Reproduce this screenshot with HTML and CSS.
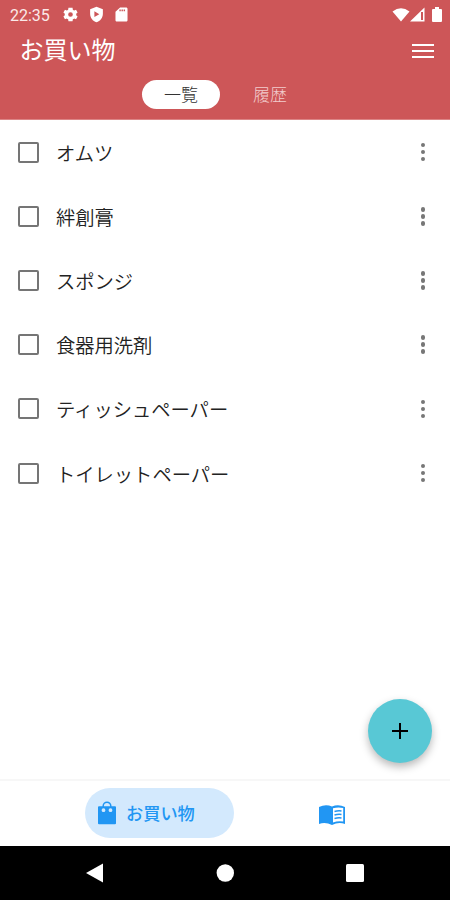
FILE: index.html
```html
<!DOCTYPE html>
<html lang="ja">
  <head>
    <meta charset="UTF-8" />
    <title>お買い物</title>
    <meta name="viewport" content="width=device-width, initial-scale=1.0" />
    <link rel="stylesheet" href="styles.css">
  </head>

  <body>
    <div class="app">
      <header class="header">
        <div class="status-bar">
          <span class="clock">22:35</span>
          <svg class="status-icon" viewBox="0 0 24 24"><path fill-rule="evenodd" d="M20 13.200a8 8 0 0 0 0-2.400l2-1.600-2.200-3.800-2.500 1a8 8 0 0 0-2-1.200L14.900 2.500H9.100l-.4 2.700a8 8 0 0 0-2 1.200l-2.500-1L2 9.200l2 1.600a8 8 0 0 0 0 2.400l-2 1.600 2.200 3.800 2.500-1a8 8 0 0 0 2 1.200l.4 2.700h5.800l.4-2.700a8 8 0 0 0 2-1.200l2.500 1 2.200-3.800zM12 15.300a3.300 3.300 0 1 1 0-6.600 3.300 3.300 0 0 1 0 6.600z" /></svg>
          <svg class="status-icon" viewBox="0 0 24 24"><path fill-rule="evenodd" d="M12 1 3 4.500V11c0 5.500 3.800 10.700 9 12 5.200-1.300 9-6.500 9-12V4.500zM9 7.500v8l7-4z" /></svg>
          <svg class="status-icon" viewBox="0 0 24 24"><path fill-rule="evenodd" d="M18 2h-8L3.500 8v12c0 1.100.9 2 2 2H18.500c1.100 0 2-.9 2-2V4c0-1.100-.9-2-2-2zM9 7.500V5h2v2.500zM12 7.500V5h2v2.500zM15 7.500V5h2v2.500z" /></svg>
          <div class="signals">
            <svg width="18" height="14" viewBox="0 0 18 14"><path d="M.5 3.500Q9-3 17.500 3.500L9 13.500z" /></svg>
            <svg width="15" height="15" viewBox="0 0 15 15"><path fill-rule="evenodd" d="M14.500.5v14H0zM11 5v8h2V5z" /></svg>
            <svg class="battery" width="10" height="15" viewBox="0 0 10 15"><path d="M3 0h4v2h2q1 0 1 1v11q0 1-1 1H1q-1 0-1-1V3q0-1 1-1h2z" /></svg>
          </div>
        </div>
        <div class="title-bar">
          <h1>お買い物</h1>
          <button class="menu-btn" aria-label="メニュー"><span></span><span></span><span></span></button>
        </div>
        <nav class="tabs">
          <a class="tab active">一覧</a>
          <a class="tab">履歴</a>
        </nav>
      </header>

      <main class="content">
        <ul class="list">
          <li class="item"><span class="checkbox"></span><span class="name">オムツ</span><span class="more"><i></i><i></i><i></i></span></li>
          <li class="item"><span class="checkbox"></span><span class="name">絆創膏</span><span class="more"><i></i><i></i><i></i></span></li>
          <li class="item"><span class="checkbox"></span><span class="name">スポンジ</span><span class="more"><i></i><i></i><i></i></span></li>
          <li class="item"><span class="checkbox"></span><span class="name">食器用洗剤</span><span class="more"><i></i><i></i><i></i></span></li>
          <li class="item"><span class="checkbox"></span><span class="name">ティッシュペーパー</span><span class="more"><i></i><i></i><i></i></span></li>
          <li class="item"><span class="checkbox"></span><span class="name">トイレットペーパー</span><span class="more"><i></i><i></i><i></i></span></li>
        </ul>
        <button class="fab" aria-label="追加">
          <svg width="18" height="18" viewBox="0 0 18 18"><path d="M9 1v16M1 9h16" /></svg>
        </button>
      </main>

      <nav class="bottom-nav">
        <a class="nav-item active">
          <svg width="20" height="24" viewBox="0 0 20 24">
            <path class="line" d="M6.200 6.500V5a3.800 3.800 0 0 1 7.600 0v1.500" />
            <path fill-rule="evenodd" d="M2 5.300h16q1 0 1 1v16q0 1-1 1H2q-1 0-1-1v-16q0-1 1-1zM6.500 7.300a1.900 1.900 0 1 0 0 3.800 1.900 1.900 0 0 0 0-3.800zM13.500 7.300a1.900 1.900 0 1 0 0 3.800 1.900 1.900 0 0 0 0-3.800z" />
          </svg>
          <span>お買い物</span>
        </a>
        <a class="nav-item book" aria-label="レシピ">
          <svg width="26" height="20" viewBox="0 0 26 20">
            <path fill-rule="evenodd" d="M0 2Q6.500-1.200 13 1.500 19.500-1.200 26 2v17q-6.500-2.200-13 1-6.500-3.200-13-1zM14 3.200v14.300Q19 15.500 24.200 16.500V3q-5-1.300-10.200.2z" />
            <path class="line" d="M15.500 6.500q3.500-1 7-.5M15.500 10q3.500-1 7-.5M15.500 13.500q3.500-1 7-.5" />
          </svg>
        </a>
      </nav>

      <footer class="system-nav">
        <svg width="18" height="20" viewBox="0 0 18 20"><path d="M17 .5v19L0 10z" /></svg>
        <svg width="18" height="20" viewBox="0 0 18 20"><circle cx="9.300" cy="10" r="8.700" /></svg>
        <svg width="18" height="20" viewBox="0 0 18 20"><rect y="1" width="18" height="18" rx="1.500" /></svg>
      </footer>
    </div>
  </body>
</html>
```

FILE: styles.css
```css
:root {
  --primary: #cd5658;
  --accent: #58c8d5;
  --blue: #2196f3;
  --blue-light: #d3e9fd;
}

* {
  box-sizing: border-box;
}

html,
body {
  height: 100%;
  margin: 0;
  font-family: Roboto, "Noto Sans CJK JP", sans-serif;
  background: #fff;
}

button {
  padding: 0;
  border: none;
  background: none;
}

svg {
  display: block;
}

.app {
  display: flex;
  flex-direction: column;
  height: 900px;
}

.header {
  height: 120px;
  background: var(--primary);
  border-bottom: 1px solid #dc8586;
  color: #fff;
}

.status-bar {
  display: flex;
  align-items: center;
  height: 29px;
  padding: 0 8px 0 10px;
  fill: #fff;
}

.clock {
  width: 52px;
  font-size: 16px;
  line-height: 29px;
  padding-top: 1px;
  color: #fbe9e9;
}

.status-icon {
  width: 17px;
  height: 17px;
  margin-right: 8.500px;
}

.signals {
  display: flex;
  align-items: center;
  margin-left: auto;
}

.battery {
  margin-left: 7px;
}

.title-bar {
  display: flex;
  align-items: center;
  justify-content: space-between;
  height: 44px;
  padding: 0 16px 0 19.500px;
}

.title-bar h1 {
  margin: 0;
  font-size: 24px;
  font-weight: 400;
  line-height: 40px;
}

.menu-btn {
  display: flex;
  flex-direction: column;
  gap: 4px;
  width: 22px;
}

.menu-btn span {
  height: 2px;
  background: #fff;
}

.tabs {
  display: flex;
  gap: 11px;
  padding: 7px 0 0 142px;
}

.tab {
  width: 78px;
  height: 29px;
  border-radius: 15px;
  font-size: 17px;
  font-weight: 300;
  line-height: 30px;
  text-align: center;
  color: #f2cccd;
}

.tab.active {
  background: #fff;
  color: #333;
}

.content {
  position: relative;
  flex: 1;
}

.list {
  margin: 0;
  padding: 0;
  list-style: none;
}

.item {
  display: flex;
  align-items: center;
  height: 64.200px;
  padding: 0 25px 0 17.500px;
}

.checkbox {
  width: 21px;
  height: 21px;
  border: 2px solid #757575;
  border-radius: 2px;
}

.name {
  flex: 1;
  margin-left: 17.500px;
  padding-top: 5px;
  font-size: 19.300px;
  font-weight: 350;
  line-height: 30px;
  color: #222;
}

.more {
  display: flex;
  flex-direction: column;
  gap: 2.500px;
  width: 4.500px;
}

.more i {
  width: 4.500px;
  height: 4.500px;
  border-radius: 50%;
  background: #777;
}

.fab {
  position: absolute;
  right: 18px;
  bottom: 16px;
  display: flex;
  align-items: center;
  justify-content: center;
  width: 64px;
  height: 64px;
  border-radius: 50%;
  background: var(--accent);
  box-shadow: 0 4px 8px rgba(0, 0, 0, 0.28);
}

.fab path {
  stroke: #000;
  stroke-width: 2;
}

.bottom-nav {
  display: flex;
  align-items: center;
  height: 67px;
  padding-left: 85px;
  border-top: 2px solid #f7f7f7;
  fill: var(--blue);
}

.nav-item {
  display: flex;
  align-items: center;
  height: 50px;
  color: var(--blue);
}

.nav-item.active {
  gap: 9px;
  width: 149px;
  margin-bottom: 2px;
  padding-left: 12px;
  border-radius: 25px;
  background: var(--blue-light);
  font-size: 17.200px;
  font-weight: 500;
}

.nav-item.book {
  margin: 2px 0 0 85px;
}

.bottom-nav .line {
  fill: none;
  stroke: var(--blue);
  stroke-width: 1.500;
}

.system-nav {
  display: flex;
  align-items: center;
  justify-content: space-between;
  height: 54px;
  padding: 0 86px;
  background: #000;
  fill: #fff;
}
```
